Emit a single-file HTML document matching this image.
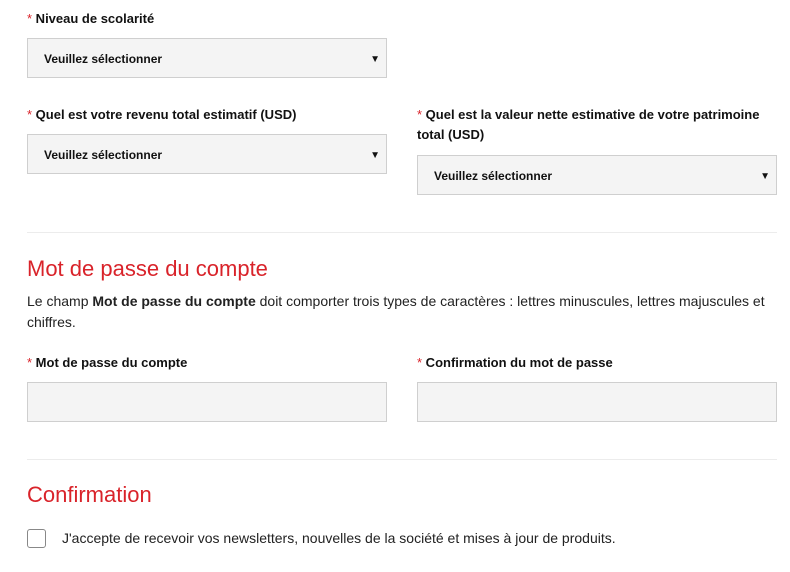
<!DOCTYPE html>
<html><head><meta charset="utf-8"><style>
body{margin:0;width:790px;height:572px;background:#fff;font-family:"Liberation Sans",Arial,sans-serif;color:#111;position:relative;overflow:hidden}
.a{position:absolute}
.lbl{font-size:13px;font-weight:bold;line-height:20px}
.lbl span{color:#d9232a;font-weight:normal}
.sel{background:#f4f4f4;border:1px solid #cfcfcf;box-sizing:border-box;height:40px;width:360px}
.sel b{position:absolute;left:16px;top:13px;font-size:12px}
.sel i{position:absolute;right:6px;top:15px;font-style:normal;font-size:10px}
.hr{height:1px;background:#ececec;left:27px;width:750px}
h2{position:absolute;margin:0;font-weight:normal;color:#d9232a;font-size:22px;left:27px}
.p{font-size:14px;line-height:21px;color:#222}
</style></head><body>
<div class="a lbl" style="left:27px;top:9px"><span>*</span> Niveau de scolarité</div>
<div class="a sel" style="left:27px;top:38px"><b>Veuillez sélectionner</b><i>▼</i></div>
<div class="a lbl" style="left:27px;top:105px"><span>*</span> Quel est votre revenu total estimatif (USD)</div>
<div class="a sel" style="left:27px;top:134px"><b>Veuillez sélectionner</b><i>▼</i></div>
<div class="a lbl" style="left:417px;top:105px;width:360px"><span>*</span> Quel est la valeur nette estimative de votre patrimoine total (USD)</div>
<div class="a sel" style="left:417px;top:155px"><b>Veuillez sélectionner</b><i>▼</i></div>
<div class="a hr" style="top:232px"></div>
<h2 style="top:256px">Mot de passe du compte</h2>
<div class="a p" style="left:27px;top:291px;width:750px">Le champ <b>Mot de passe du compte</b> doit comporter trois types de caractères : lettres minuscules, lettres majuscules et chiffres.</div>
<div class="a lbl" style="left:27px;top:353px"><span>*</span> Mot de passe du compte</div>
<div class="a lbl" style="left:417px;top:353px"><span>*</span> Confirmation du mot de passe</div>
<div class="a sel" style="left:27px;top:382px"></div>
<div class="a sel" style="left:417px;top:382px"></div>
<div class="a hr" style="top:459px"></div>
<h2 style="top:482px">Confirmation</h2>
<div class="a" style="left:27px;top:529px;width:19px;height:19px;border:1px solid #888;border-radius:3px;box-sizing:border-box"></div>
<div class="a p" style="left:62px;top:528px">J'accepte de recevoir vos newsletters, nouvelles de la société et mises à jour de produits.</div>
</body></html>
